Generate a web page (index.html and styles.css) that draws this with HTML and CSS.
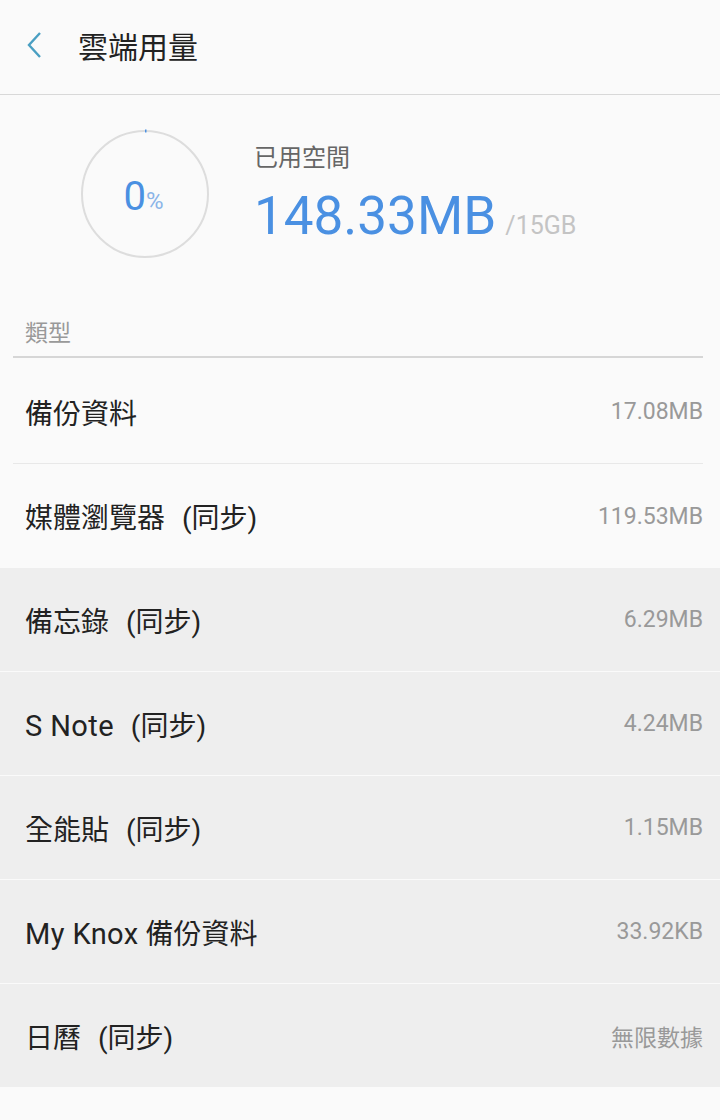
FILE: index.html
```html
<!DOCTYPE html>
<html>
<head>
    <title>雲端用量</title>
    <link rel="stylesheet" href="styles.css">
</head>
<body>
    <div class="header">
        <svg class="back" width="20" height="30" viewBox="0 0 20 30">
            <path d="M15 3 L4 15 L15 27" fill="none" stroke="#4a9fc2" stroke-width="2.4"/>
        </svg>
        <span class="title">雲端用量</span>
    </div>

    <div class="summary">
        <div class="ring">
            <svg width="130" height="130" viewBox="0 0 130 130">
                <circle cx="65" cy="65" r="63" fill="none" stroke="#dddddd" stroke-width="2"/>
                <path d="M65 2 A63 63 0 0 1 66.5 2" fill="none" stroke="#4a90e2" stroke-width="3"/>
            </svg>
            <div class="pct"><span class="num">0</span><span class="sign">%</span></div>
        </div>
        <div class="used">
            <div class="label">已用空間</div>
            <div class="amount">148.33MB <span class="total">/15GB</span></div>
        </div>
    </div>

    <div class="section">類型</div>

    <div class="list">
        <div class="row first">
            <span class="name">備份資料</span>
            <span class="size">17.08MB</span>
        </div>
        <div class="row last">
            <span class="name">媒體瀏覽器 <span class="sync">(同步)</span></span>
            <span class="size">119.53MB</span>
        </div>
        <div class="row pressed">
            <span class="name">備忘錄 <span class="sync">(同步)</span></span>
            <span class="size">6.29MB</span>
        </div>
        <div class="row pressed">
            <span class="name"><span class="latin">S Note</span> <span class="sync">(同步)</span></span>
            <span class="size">4.24MB</span>
        </div>
        <div class="row pressed">
            <span class="name">全能貼 <span class="sync">(同步)</span></span>
            <span class="size">1.15MB</span>
        </div>
        <div class="row pressed">
            <span class="name"><span class="latin">My Knox</span> 備份資料</span>
            <span class="size">33.92KB</span>
        </div>
        <div class="row pressed">
            <span class="name">日曆 <span class="sync">(同步)</span></span>
            <span class="size">無限數據</span>
        </div>
    </div>
</body>
</html>
```

FILE: styles.css
```css
body {
    margin: 0;
    background: #fafafa;
    font-family: Roboto, "Noto Sans CJK TC", sans-serif;
    color: #222;
}
.header {
    height: 94px;
    display: flex;
    align-items: center;
    border-bottom: 1px solid #d8d8d8;
}
.back {
    margin-left: 25px;
    margin-right: 33px;
    margin-top: -4px;
}
.title {
    font-size: 30px;
    color: #222;
    margin-top: -4px;
}
.summary {
    display: flex;
    align-items: flex-start;
    padding: 34px 0 0 80px;
    height: 160px;
    box-sizing: border-box;
}
.ring {
    position: relative;
    width: 130px;
    height: 130px;
}
.ring svg {
    display: block;
}
.pct {
    position: absolute;
    left: 0;
    top: 0;
    width: 130px;
    height: 130px;
    display: flex;
    align-items: center;
    justify-content: center;
    color: #4a90e2;
}
.pct .num {
    font-size: 40px;
    margin-top: 4px;
    margin-left: -3px;
}
.pct .sign {
    font-size: 24px;
    color: #8ab4e8;
    margin-top: 14px;
}
.used {
    margin-left: 44px;
    margin-top: 14px;
}
.used .label {
    font-size: 24px;
    color: #666;
    line-height: 30px;
}
.used .amount {
    font-size: 53px;
    color: #4a90e2;
    line-height: 60px;
    margin-top: 13px;
}
.used .total {
    font-size: 25px;
    color: #c4c4c4;
    margin-left: -4px;
}
.section {
    margin: 64px 17px 0 13px;
    padding: 0 0 7px 12px;
    font-size: 23px;
    color: #999;
    border-bottom: 2px solid #d6d6d6;
    line-height: 30px;
}
.row {
    height: 104px;
    box-sizing: border-box;
    display: flex;
    align-items: center;
    justify-content: space-between;
    margin: 0 17px 0 13px;
    padding: 0 0 0 12px;
    border-bottom: 1px solid #e8e8e8;
}
.row.first {
    height: 106px;
    padding-top: 2px;
}
.row.last {
    border-bottom: none;
}
.row.pressed {
    margin: 0;
    padding: 0 17px 0 25px;
    background: #eeeeee;
    border-bottom: 1px solid #fafafa;
}
.name {
    font-size: 28px;
    color: #222;
}
.latin {
    font-size: 29px;
    letter-spacing: 0.4px;
}
.sync {
    margin-left: 10px;
}
.size {
    font-size: 23px;
    color: #999;
}
```
